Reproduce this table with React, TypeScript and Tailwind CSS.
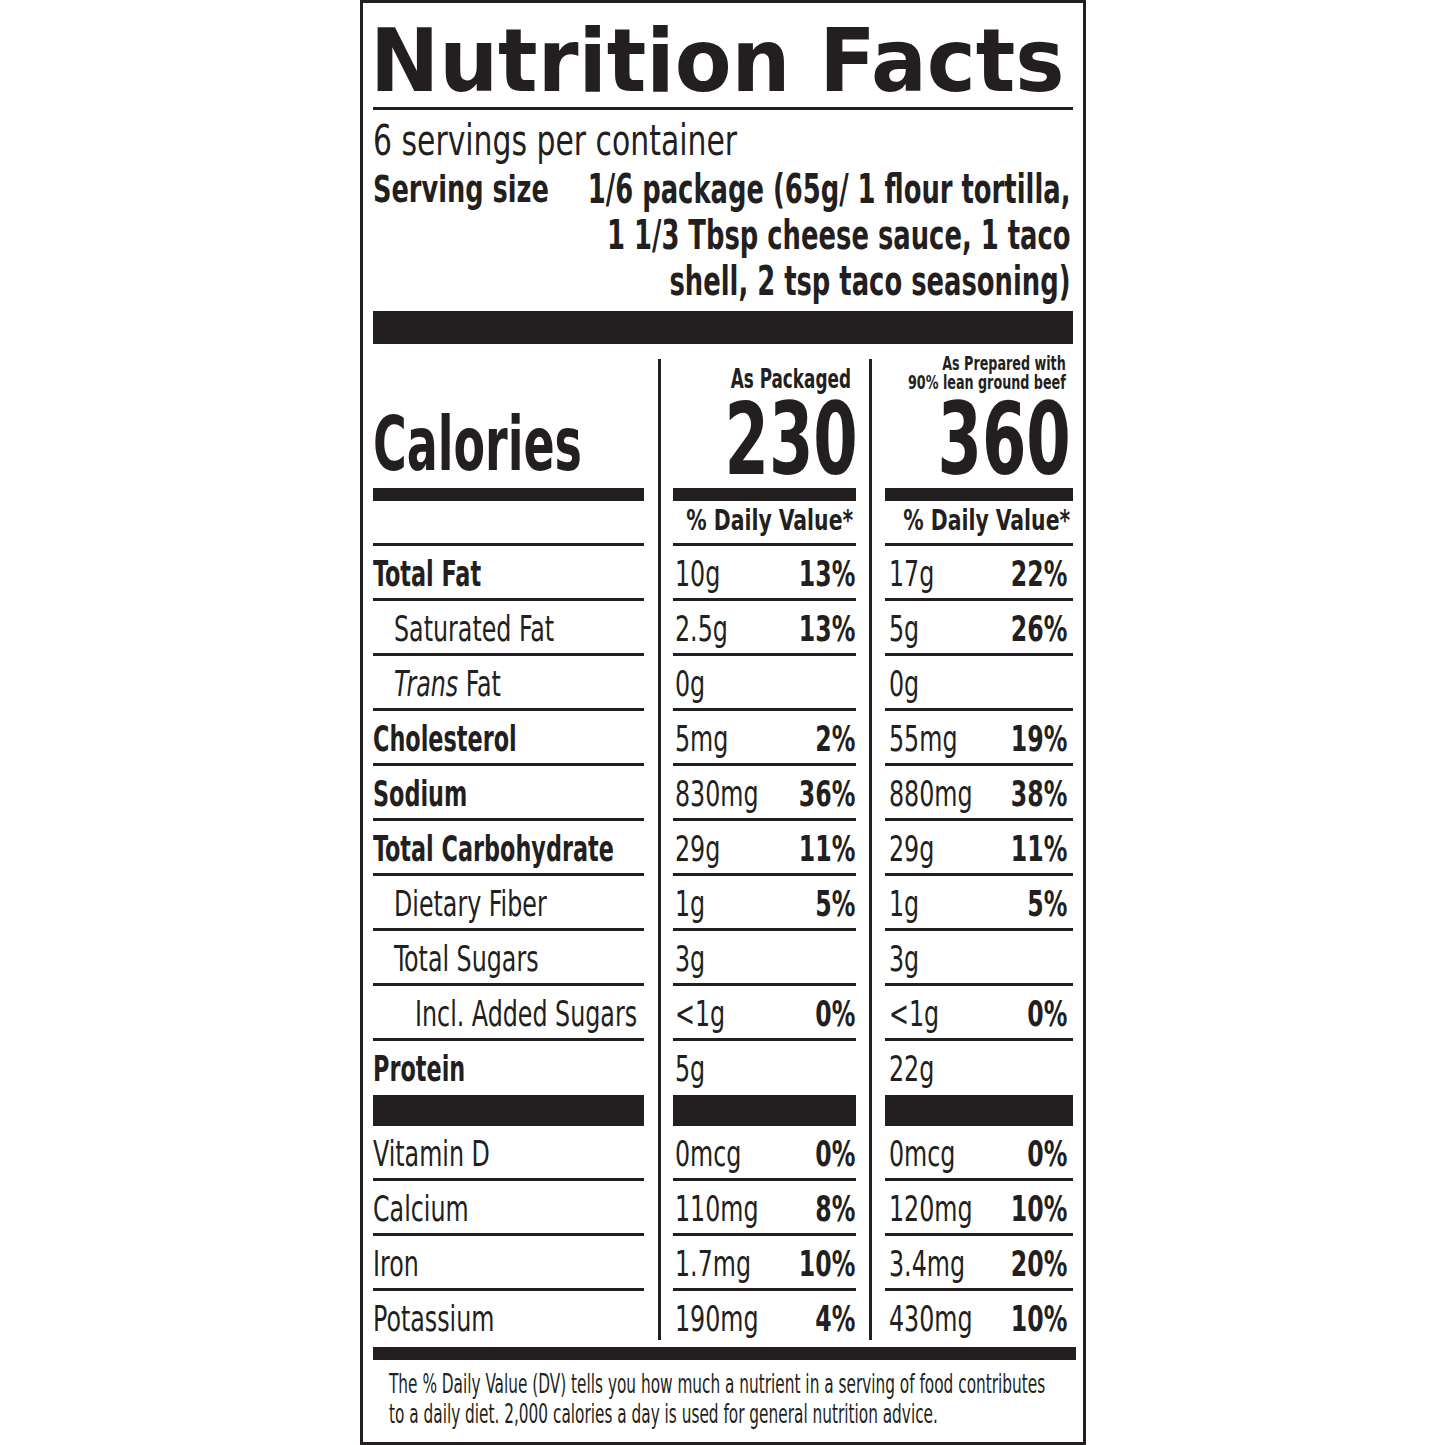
import * as React from 'react';
import clsx from 'clsx';

type Row = {
  label: React.ReactNode;
  bold?: boolean;
  indent?: 0 | 1 | 2;
  a: [string, string];
  b: [string, string];
};

const nutrients: Row[] = [
  { label: 'Total Fat', bold: true, a: ['10g', '13%'], b: ['17g', '22%'] },
  { label: 'Saturated Fat', indent: 1, a: ['2.5g', '13%'], b: ['5g', '26%'] },
  {
    label: (
      <>
        <i>Trans</i> Fat
      </>
    ),
    indent: 1,
    a: ['0g', ''],
    b: ['0g', ''],
  },
  { label: 'Cholesterol', bold: true, a: ['5mg', '2%'], b: ['55mg', '19%'] },
  { label: 'Sodium', bold: true, a: ['830mg', '36%'], b: ['880mg', '38%'] },
  { label: 'Total Carbohydrate', bold: true, a: ['29g', '11%'], b: ['29g', '11%'] },
  { label: 'Dietary Fiber', indent: 1, a: ['1g', '5%'], b: ['1g', '5%'] },
  { label: 'Total Sugars', indent: 1, a: ['3g', ''], b: ['3g', ''] },
  { label: 'Incl. Added Sugars', indent: 2, a: ['<1g', '0%'], b: ['<1g', '0%'] },
];

const vitamins: Row[] = [
  { label: 'Vitamin D', a: ['0mcg', '0%'], b: ['0mcg', '0%'] },
  { label: 'Calcium', a: ['110mg', '8%'], b: ['120mg', '10%'] },
  { label: 'Iron', a: ['1.7mg', '10%'], b: ['3.4mg', '20%'] },
  { label: 'Potassium', a: ['190mg', '4%'], b: ['430mg', '10%'] },
];

// DejaVu Sans Condensed is still wider than the label's condensed face, so squeeze it
function Sq({ className, children }: { className?: string; children?: React.ReactNode }) {
  return <span className={clsx('inline-block shrink-0 whitespace-nowrap', className)}>{children}</span>;
}

// one horizontal band of the three-column table, vertical rules included
function Cols({
  className,
  cell,
  vline,
  a,
  b,
  c,
}: {
  className?: string;
  cell?: string;
  vline?: string;
  a?: React.ReactNode;
  b?: React.ReactNode;
  c?: React.ReactNode;
}) {
  const v = clsx('w-[3px] shrink-0 bg-[#231f20]', vline);
  return (
    <div className={clsx('flex', className)}>
      <div className={clsx('w-[271px] shrink-0', cell)}>{a}</div>
      <div className="w-[14px] shrink-0" />
      <div className={v} />
      <div className="w-[12px] shrink-0" />
      <div className={clsx('w-[183px] shrink-0', cell)}>{b}</div>
      <div className="w-[13px] shrink-0" />
      <div className={v} />
      <div className="w-[13px] shrink-0" />
      <div className={clsx('w-[188px] shrink-0', cell)}>{c}</div>
    </div>
  );
}

function Amount({ v, pct, last }: { v: string; pct: string; last?: boolean }) {
  return (
    <div className={clsx('grid w-full', last ? 'pl-[4px] pr-[5px]' : 'pl-[2px]')}>
      <Sq className="col-start-1 row-start-1 origin-left scale-x-[0.755] justify-self-start">{v}</Sq>
      <Sq className="col-start-1 row-start-1 origin-right scale-x-[0.75] justify-self-end font-bold">{pct}</Sq>
    </div>
  );
}

function NutrientRow({ row, h = 'h-[55px]', border = true }: { row: Row; h?: string; border?: boolean }) {
  return (
    <Cols
      cell={clsx(
        h,
        'flex items-start pt-[11px] text-[35px] leading-none',
        border && 'border-b-[3px] border-[#231f20]'
      )}
      a={
        <Sq
          className={clsx(
            'origin-left',
            row.bold ? 'scale-x-[0.71] font-bold' : 'scale-x-[0.755]',
            row.indent === 1 && 'ml-[21px]',
            row.indent === 2 && 'ml-[42px]'
          )}
        >
          {row.label}
        </Sq>
      }
      b={<Amount v={row.a[0]} pct={row.a[1]} />}
      c={<Amount v={row.b[0]} pct={row.b[1]} last />}
    />
  );
}

export default function App() {
  return (
    <div className="min-h-screen bg-white">
      <div className="mx-auto h-[1445px] w-[726px] overflow-hidden border-[3px] border-[#231f20] px-[10px] text-[#231f20] font-['DejaVu_Sans_Condensed','DejaVu_Sans',sans-serif] font-stretch-condensed">
        <h1 className="h-[104px] pt-[14px] font-['DejaVu_Sans',sans-serif] text-[88px] font-bold leading-none font-stretch-normal">
          <Sq className="ml-[-3px] origin-left scale-x-[0.94]">Nutrition Facts</Sq>
        </h1>
        <div className="h-[3px] bg-[#231f20]" />

        <p className="mt-[8px] text-[42px] leading-[46px]">
          <Sq className="origin-left scale-x-[0.79]">6 servings per container</Sq>
        </p>
        <div className="mt-[2px] flex font-bold">
          <div className="w-0">
            <Sq className="origin-left scale-x-[0.75] text-[38px] leading-[46px]">Serving size</Sq>
          </div>
          <div className="flex flex-1 flex-col items-end">
            <Sq className="mr-[2px] origin-right scale-x-[0.70] text-right text-[41px] leading-[46px]">
              1/6 package (65g/ 1 flour tortilla,
              <br />
              1 1/3 Tbsp cheese sauce, 1 taco
              <br />
              shell, 2 tsp taco seasoning)
            </Sq>
          </div>
        </div>
        <div className="mt-[7px] h-[33px] bg-[#231f20]" />

        {/* calories */}
        <Cols
          cell="h-[144px] flex flex-col justify-end font-bold"
          vline="mt-[15px]"
          a={
            <div className="pb-[7px] text-[74px] leading-none">
              <Sq className="origin-left scale-x-[0.69]">Calories</Sq>
            </div>
          }
          b={
            <div className="flex flex-col items-end pb-[8px]">
              <Sq className="mb-[8px] mr-[5px] origin-right scale-x-[0.72] text-[26px] leading-[26px]">
                As Packaged
              </Sq>
              <Sq className="mr-[-2px] origin-right scale-x-[0.71] text-[100px] leading-[80px]">230</Sq>
            </div>
          }
          c={
            <div className="flex flex-col items-end pb-[8px]">
              <Sq className="mr-[7px] origin-right scale-x-[0.745] text-right text-[19px] leading-[19px]">
                As Prepared with
                <br />
                90% lean ground beef
              </Sq>
              <Sq className="mr-[2px] mt-[8px] origin-right scale-x-[0.71] text-[100px] leading-[80px]">360</Sq>
            </div>
          }
        />
        <Cols cell="h-[13px] bg-[#231f20]" />
        <Cols
          cell="h-[45px] flex items-end justify-end pb-[8px] border-b-[3px] border-[#231f20] text-[28px] font-bold leading-none"
          b={<Sq className="mr-[2px] origin-right scale-x-[0.81]">% Daily Value*</Sq>}
          c={<Sq className="mr-[2px] origin-right scale-x-[0.81]">% Daily Value*</Sq>}
        />

        {nutrients.map((r, i) => (
          <NutrientRow key={i} row={r} />
        ))}
        <NutrientRow
          row={{ label: 'Protein', bold: true, a: ['5g', ''], b: ['22g', ''] }}
          h="h-[54px]"
          border={false}
        />
        <Cols cell="h-[31px] bg-[#231f20]" />

        {vitamins.map((r, i) => (
          <NutrientRow
            key={i}
            row={r}
            h={i === vitamins.length - 1 ? 'h-[49px]' : 'h-[55px]'}
            border={i !== vitamins.length - 1}
          />
        ))}

        <div className="mt-[7px] h-[13px] w-[703px] bg-[#231f20]" />
        <p className="pl-[16px] pt-[9px] text-[27px] leading-[30px]">
          <Sq className="origin-left scale-x-[0.631]">
            The % Daily Value (DV) tells you how much a nutrient in a serving of food contributes
            <br />
            to a daily diet. 2,000 calories a day is used for general nutrition advice.
          </Sq>
        </p>
      </div>
    </div>
  );
}
